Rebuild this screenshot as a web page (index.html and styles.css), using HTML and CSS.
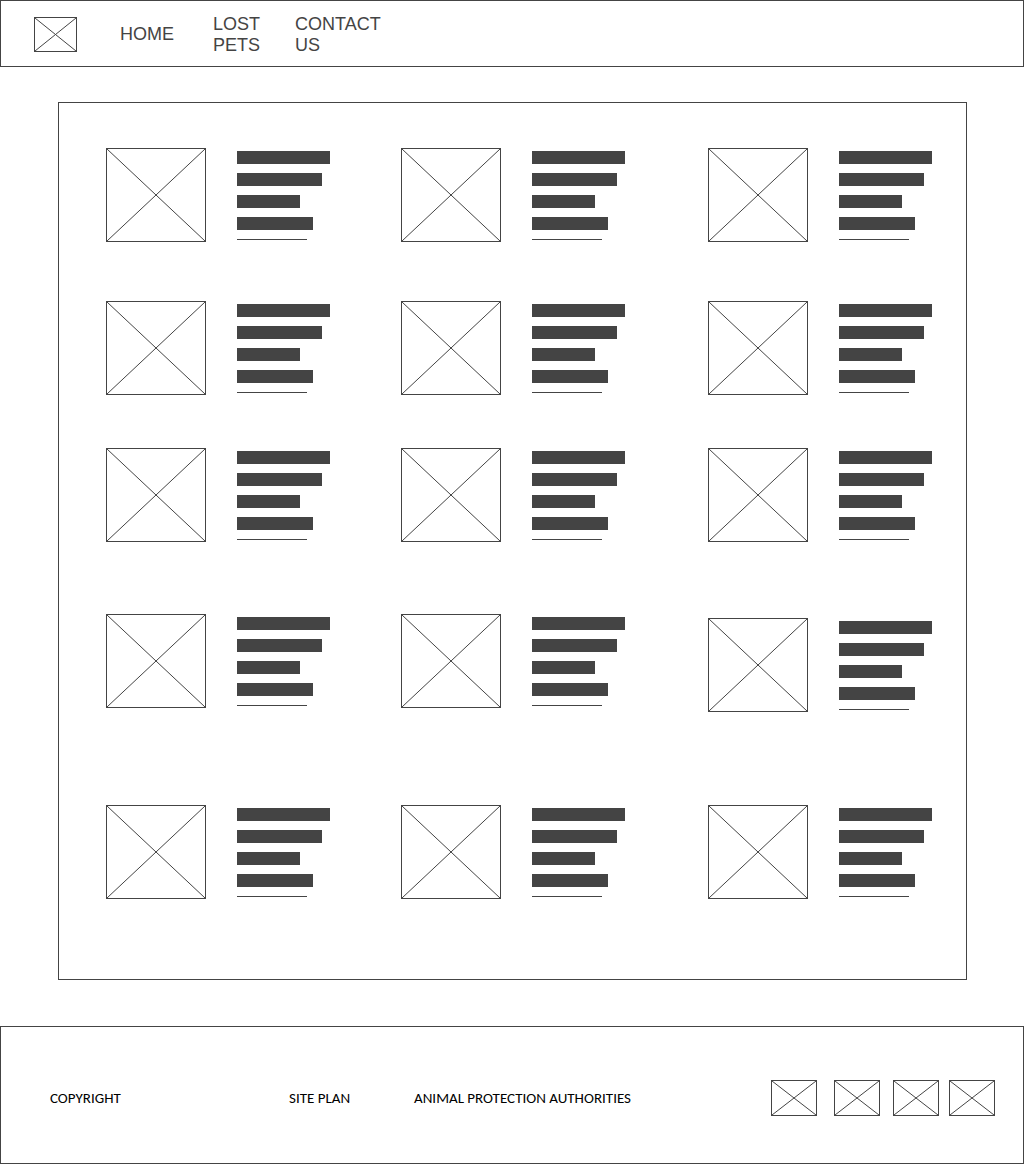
FILE: index.html
```html
<!DOCTYPE html>
<html lang="en">
<head>
<meta charset="utf-8">
<meta name="viewport" content="width=device-width, initial-scale=1">
<title>Lost Pets</title>
<link rel="stylesheet" href="styles.css">
</head>
<body>
<header class="site-header">
  <svg class="picture logo"><line x1="0" y1="0" x2="100%" y2="100%"/><line x1="100%" y1="0" x2="0" y2="100%"/></svg>
  <nav class="main-nav">
    <a href="#">HOME</a>
    <a href="#">LOST<br>PETS</a>
    <a href="#">CONTACT<br>US</a>
  </nav>
</header>
<main class="gallery" id="gallery"></main>
<footer class="site-footer">
  <span>COPYRIGHT</span>
  <a href="#">SITE PLAN</a>
  <a href="#">ANIMAL PROTECTION AUTHORITIES</a>
  <div class="social">
    <svg class="picture badge"><line x1="0" y1="0" x2="100%" y2="100%"/><line x1="100%" y1="0" x2="0" y2="100%"/></svg>
    <svg class="picture badge"><line x1="0" y1="0" x2="100%" y2="100%"/><line x1="100%" y1="0" x2="0" y2="100%"/></svg>
    <svg class="picture badge"><line x1="0" y1="0" x2="100%" y2="100%"/><line x1="100%" y1="0" x2="0" y2="100%"/></svg>
    <svg class="picture badge"><line x1="0" y1="0" x2="100%" y2="100%"/><line x1="100%" y1="0" x2="0" y2="100%"/></svg>
  </div>
</footer>
<template id="card">
  <article class="card">
    <svg class="picture photo"><line x1="0" y1="0" x2="100%" y2="100%"/><line x1="100%" y1="0" x2="0" y2="100%"/></svg>
    <div class="summary">
      <div class="bar bar-full"></div>
      <div class="bar bar-long"></div>
      <div class="bar bar-short"></div>
      <div class="bar bar-medium"></div>
      <div class="rule"></div>
    </div>
  </article>
</template>
<script src="gallery.js"></script>
</body>
</html>
```
FILE: styles.css
```css
* {
  box-sizing: border-box;
}

body {
  margin: 0;
  background: #fff;
  color: #444;
  font-family: "Liberation Sans", Arial, sans-serif;
}

a {
  color: inherit;
  text-decoration: none;
}

.picture {
  display: block;
  flex: none;
  border: 1px solid #444;
  stroke: #444;
  stroke-width: 1;
}

.site-header {
  display: flex;
  align-items: center;
  gap: 43px;
  min-height: 67px;
  padding: 2px 33px 0;
  border: 1px solid #444;
}

.logo {
  width: 43px;
  height: 35px;
}

.main-nav {
  display: grid;
  grid-template-columns: 93px 82px auto;
  align-items: center;
  font-size: 18px;
  line-height: 21px;
}

.gallery {
  margin: 35px 57px 46px 58px;
  padding: 45px 0 80px 47px;
  border: 1px solid #444;
}

.row {
  display: grid;
  grid-template-columns: 295fr 307fr 258fr;
  margin-bottom: 53px;
}

.row:first-child {
  margin-bottom: 59px;
}

.row:nth-child(3) {
  margin-bottom: 72px;
}

.row:nth-child(4) {
  min-height: 98px;
  margin-bottom: 93px;
}

.row:nth-child(4) .card:last-child {
  align-self: end;
}

.row:last-child {
  margin-bottom: 0;
}

.card {
  display: flex;
  gap: 31px;
}

.photo {
  width: 100px;
  height: 94px;
}

.summary {
  display: flex;
  flex-direction: column;
  gap: 9px;
  padding-top: 3px;
}

.bar {
  height: 13px;
  background: #444;
}

.bar-full {
  width: 93px;
}

.bar-long {
  width: 85px;
}

.bar-short {
  width: 63px;
}

.bar-medium {
  width: 76px;
}

.rule {
  width: 70px;
  height: 1px;
  background: #444;
}

.site-footer {
  display: grid;
  grid-template-columns: 239fr 125fr 357fr auto;
  align-items: center;
  min-height: 138px;
  padding: 6px 28px 0 49px;
  border: 1px solid #444;
  color: #000;
  font-family: Carlito, Lato, sans-serif;
  font-size: 15px;
  line-height: 18px;
}

.social {
  display: grid;
  grid-template-columns: 63px 59px 56px 46px;
}

.badge {
  width: 46px;
  height: 36px;
}
```
FILE: gallery.js
```js
const gallery = document.getElementById("gallery");
const card = document.getElementById("card");

for (let r = 0; r < 5; r++) {
  const row = document.createElement("div");
  row.className = "row";
  for (let c = 0; c < 3; c++) {
    row.append(card.content.cloneNode(true));
  }
  gallery.append(row);
}
```
